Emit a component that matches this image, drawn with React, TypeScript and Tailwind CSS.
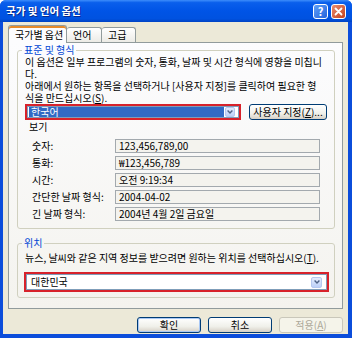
import React from 'react';

function ComboArrow({ size = 10 }: { size?: number }) {
  return (
    <div
      className="shrink-0 rounded-[2px] border border-[#b6c8ef] bg-[linear-gradient(to_bottom,#e4ecfd,#bcd0f8)] flex items-center justify-center"
      style={{ width: size, height: size }}
    >
      <svg width="6" height="4" viewBox="0 0 6 4">
        <path d="M0.6 0.6 L3 3 L5.4 0.6" fill="none" stroke="#4d6185" strokeWidth="1.4" />
      </svg>
    </div>
  );
}

function XpButton({ children, width, focused, disabled }: { children: React.ReactNode; width: string; focused?: boolean; disabled?: boolean }) {
  return (
    <div
      className={`${width} h-[16px] rounded-[3px] border flex items-center justify-center leading-none ${
        disabled
          ? 'border-[#c9c7ba] text-[#aca899] bg-[#f5f4ea]'
          : 'border-[#003c74] text-black bg-[linear-gradient(to_bottom,#ffffff,#f0f0ea_60%,#d6d0c5)]'
      } ${focused ? 'shadow-[inset_0_0_0_1px_#a9c8f5]' : ''}`}
    >
      {children}
    </div>
  );
}

const rows = [
  { label: '숫자:', value: '123,456,789,00' },
  { label: '통화:', value: '₩123,456,789' },
  { label: '시간:', value: '오전 9:19:34' },
  { label: '간단한 날짜 형식:', value: '2004-04-02' },
  { label: '긴 날짜 형식:', value: '2004년 4월 2일 금요일' },
];

export default function App() {
  return (
    <div className="w-[352px] h-[338px] flex flex-col bg-[#0b4ddb] rounded-t-[6px] overflow-hidden font-['Noto_Sans_CJK_KR',sans-serif] text-[10px] text-black">
      {/* Title bar */}
      <div className="h-[22px] shrink-0 flex items-center pl-[6px] pr-[6px] bg-[linear-gradient(to_bottom,#3d8dfb_0%,#0a5fec_12%,#0054e6_50%,#0052e0_85%,#0043c4_100%)]">
        <span className="text-white font-bold text-[10.5px] leading-none [text-shadow:1px_1px_0_#0a2a8a]">국가 및 언어 옵션</span>
        <div className="ml-auto flex items-center gap-[3px]">
          <div className="w-[15px] h-[15px] rounded-[3px] border border-white bg-[linear-gradient(135deg,#5fa0f8,#2563dc)] flex items-center justify-center text-white font-bold text-[11px] leading-none">
            ?
          </div>
          <div className="w-[15px] h-[15px] rounded-[3px] border border-white bg-[linear-gradient(135deg,#eb8d70,#c3401c)] flex items-center justify-center">
            <svg width="9" height="9" viewBox="0 0 9 9">
              <path d="M1.5 1.5 L7.5 7.5 M7.5 1.5 L1.5 7.5" stroke="white" strokeWidth="1.8" strokeLinecap="round" />
            </svg>
          </div>
        </div>
      </div>

      {/* Body */}
      <div className="flex-1 ml-[3px] mr-[4px] mb-[4px] bg-[#ece9d8] flex flex-col px-[5px] pt-[3px]">
        {/* Tabs */}
        <div className="h-[17px] flex items-end relative z-10">
          <div className="w-[59px] h-[18px] -mb-[1px] bg-[#fcfcfe] border border-b-0 border-[#919b9c] rounded-t-[3px] shadow-[inset_0_2px_0_#e68b2c] flex items-center pl-[6px] pt-[1px] leading-none">
            국가별 옵션
          </div>
          <div className="w-[35px] h-[15px] bg-[linear-gradient(to_bottom,#ffffff,#ecebe6)] border border-l-0 border-b-0 border-[#919b9c] rounded-t-[3px] flex items-center pl-[6px] leading-none">
            언어
          </div>
          <div className="w-[34px] h-[15px] bg-[linear-gradient(to_bottom,#ffffff,#ecebe6)] border border-l-0 border-b-0 border-[#919b9c] rounded-t-[3px] flex items-center pl-[6px] leading-none">
            고급
          </div>
        </div>

        {/* Tab panel */}
        <div className="h-[267px] shrink-0 border border-[#919b9c] bg-[linear-gradient(to_bottom,#fcfcfe,#f4f3ee)] flex flex-col">
          {/* 표준 및 형식 */}
          <fieldset className="mt-[1px] ml-[8px] mr-[7px] border border-[#d0d0bf] rounded-[3px] p-0 pb-[7px]">
            <legend className="ml-[4px] px-[2px] leading-[12px] text-[#0046d5]">표준 및 형식</legend>
            <div className="pl-[7px] flex flex-col">
              <div className="leading-[12px] whitespace-nowrap">
                <div>이 옵션은 일부 프로그램의 숫자, 통화, 날짜 및 시간 형식에 영향을 미칩니</div>
                <div>다.</div>
              </div>
              <div className="leading-[12px] whitespace-nowrap">
                <div>아래에서 원하는 항목을 선택하거나 [사용자 지정]를 클릭하여 필요한 형</div>
                <div>
                  식을 만드십시오(<span className="underline">S</span>).
                </div>
              </div>
              <div className="h-[16px] flex items-center">
                <div className="w-[216px] h-[16px] border-2 border-[#d7222b] flex items-center bg-white">
                  <div className="flex-1 h-full flex items-center gap-[1px] pl-[1px] pr-[3px] border border-[#7f9db9]">
                    <div className="flex-1 h-[10px] bg-[#316ac5] text-white flex items-center pl-[2px] leading-none">한국어</div>
                    <ComboArrow size={10} />
                  </div>
                </div>
                <div className="ml-[8px]">
                  <XpButton width="w-[78px]">
                    사용자 지정(<span className="underline">Z</span>)...
                  </XpButton>
                </div>
              </div>
              <div className="mt-[1px] pl-[4px] leading-[12px]">보기</div>
              <div className="mt-[6px] flex flex-col gap-[3px] pl-[7px]">
                {rows.map((r) => (
                  <div key={r.label} className="flex items-center h-[14px]">
                    <div className="w-[83px] whitespace-nowrap leading-none">{r.label}</div>
                    <div className="w-[205px] h-[14px] border border-[#a3a9ae] bg-[#f4f3ee] flex items-center pl-[3px] leading-none whitespace-nowrap">
                      {r.value}
                    </div>
                  </div>
                ))}
              </div>
            </div>
          </fieldset>

          {/* 위치 */}
          <fieldset className="mt-[8px] ml-[8px] mr-[7px] border border-[#d0d0bf] rounded-[3px] p-0 pb-[5px]">
            <legend className="ml-[4px] px-[2px] leading-[12px] text-[#0046d5]">위치</legend>
            <div className="pl-[7px] flex flex-col">
              <div className="mt-[3px] leading-[12px] whitespace-nowrap">
                뉴스, 날씨와 같은 지역 정보를 받으려면 원하는 위치를 선택하십시오(<span className="underline">T</span>).
              </div>
              <div className="mt-[8px] -ml-[1px] w-[305px] h-[20px] border-2 border-[#d7222b] bg-white flex items-center">
                <div className="flex-1 h-full flex items-center pl-[4px] pr-[4px] border border-[#7f9db9]">
                  <span className="flex-1 leading-none">대한민국</span>
                  <ComboArrow size={11} />
                </div>
              </div>
            </div>
          </fieldset>
        </div>

        {/* Dialog buttons */}
        <div className="mt-[8px] flex justify-end gap-[7px]">
          <XpButton width="w-[64px]" focused>
            확인
          </XpButton>
          <XpButton width="w-[64px]">취소</XpButton>
          <XpButton width="w-[64px]" disabled>
            적용(<span className="underline">A</span>)
          </XpButton>
        </div>
      </div>
    </div>
  );
}
